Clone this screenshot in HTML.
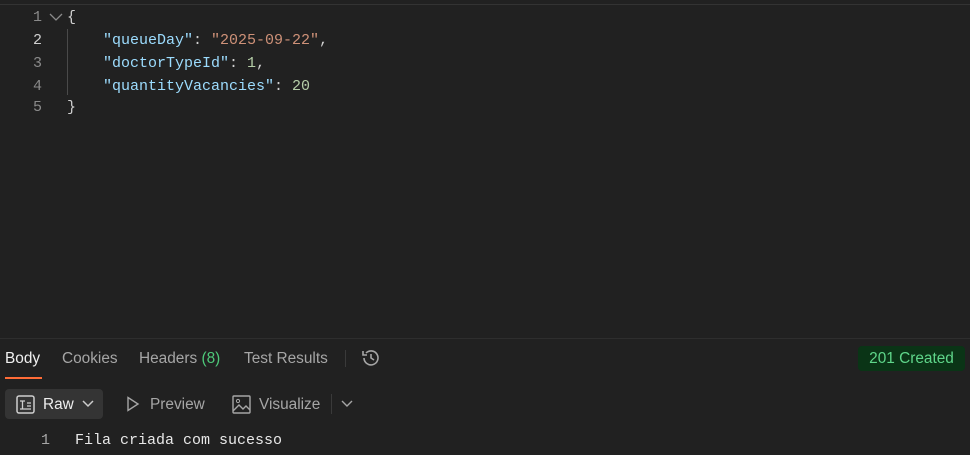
<!DOCTYPE html>
<html><head><meta charset="utf-8"><style>
*{margin:0;padding:0;box-sizing:border-box}
body{width:970px;height:455px;background:#212121;overflow:hidden;position:relative;font-family:"Liberation Sans",sans-serif;color:#a6a6a6}
.top{position:absolute;left:0;top:0;width:970px;height:5px;background:#212121;border-bottom:1px solid #333}
.mono{font-family:"Liberation Mono",monospace;font-size:15px}
.ln{position:absolute;left:0;width:42px;text-align:right;color:#8a8a8a}
.code{position:absolute;left:67px;white-space:pre;color:#d0d0d0}
.k{color:#9cdcfe}.s{color:#ce9178}.n{color:#b5cea8}
.guide{position:absolute;left:67px;top:29px;width:1px;height:66px;background:#4a4a4a}
.div{position:absolute;left:0;top:338px;width:970px;height:1px;background:#2e2e2e}
.tab{position:absolute;top:350px;font-size:15.4px;color:#a6a6a6}
</style></head><body>
<div class="top"></div>
<div class="mono">
<div class="ln" style="top:9px">1</div>
<div class="ln" style="top:32px;color:#cfcfcf">2</div>
<div class="ln" style="top:55px">3</div>
<div class="ln" style="top:78px">4</div>
<div class="ln" style="top:99px">5</div>
<svg style="position:absolute;left:49px;top:12px" width="14" height="10"><path d="M1 2 L7 8 L13 2" stroke="#8a8a8a" stroke-width="1.3" fill="none"/></svg>
<div class="guide"></div>
<div class="code" style="top:9px">{</div>
<div class="code" style="top:32px;left:103px"><span class="k">"queueDay"</span>: <span class="s">"2025-09-22"</span>,</div>
<div class="code" style="top:55px;left:103px"><span class="k">"doctorTypeId"</span>: <span class="n">1</span>,</div>
<div class="code" style="top:78px;left:103px"><span class="k">"quantityVacancies"</span>: <span class="n">20</span></div>
<div class="code" style="top:99px">}</div>
</div>
<div class="div"></div>
<div class="tab" style="left:5px;color:#f0f0f0">Body</div>
<div style="position:absolute;left:5px;top:377px;width:37px;height:2px;background:#ff6c37"></div>
<div class="tab" style="left:62px">Cookies</div>
<div class="tab" style="left:139px">Headers <span style="color:#4ec97a">(8)</span></div>
<div class="tab" style="left:244px">Test Results</div>
<div style="position:absolute;left:345px;top:350px;width:1px;height:17px;background:#3a3a3a"></div>
<svg style="position:absolute;left:360px;top:347px" width="22" height="22" viewBox="0 0 22 22"><path d="M4 11 A7 7 0 1 0 6 6" stroke="#a6a6a6" stroke-width="1.6" fill="none"/><path d="M3 4 L3 8 L7 8" stroke="#a6a6a6" stroke-width="1.6" fill="none"/><path d="M11 7 L11 11 L14 13" stroke="#a6a6a6" stroke-width="1.6" fill="none"/></svg>
<div style="position:absolute;left:858px;top:346px;width:107px;height:25px;background:#0a3416;border-radius:4px;color:#5fd68a;font-size:15.4px;line-height:25px;text-align:center">201 Created</div>
<div style="position:absolute;left:5px;top:389px;width:98px;height:30px;background:#343434;border-radius:4px"></div>
<svg style="position:absolute;left:16px;top:395px" width="19" height="19"><rect x="1" y="1" width="17" height="17" rx="2" stroke="#cfcfcf" stroke-width="1.5" fill="none"/><path d="M4 6 H9 M6.5 6 V14 M11 8 H15 M11 11 H15 M4 14 H15" stroke="#cfcfcf" stroke-width="1.3"/></svg>
<div class="tab" style="left:43px;top:396px;color:#eee">Raw</div>
<svg style="position:absolute;left:82px;top:399px" width="12" height="10"><path d="M1 2 L6 7 L11 2" stroke="#ccc" stroke-width="1.5" fill="none"/></svg>
<svg style="position:absolute;left:126px;top:396px" width="14" height="16"><path d="M2 1.5 L12 8 L2 14.5 Z" stroke="#a6a6a6" stroke-width="1.4" fill="none"/></svg>
<div class="tab" style="left:150px;top:396px">Preview</div>
<svg style="position:absolute;left:232px;top:395px" width="19" height="19"><rect x="1" y="1" width="17" height="17" rx="1" stroke="#a6a6a6" stroke-width="1.4" fill="none"/><circle cx="6" cy="6" r="1.6" stroke="#a6a6a6" fill="none"/><path d="M1 16 L7 10 L11 14 L14 11 L18 15" stroke="#a6a6a6" stroke-width="1.4" fill="none"/></svg>
<div class="tab" style="left:259px;top:396px">Visualize</div>
<div style="position:absolute;left:331px;top:394px;width:1px;height:20px;background:#3a3a3a"></div>
<svg style="position:absolute;left:341px;top:399px" width="12" height="10"><path d="M1 2 L6 7 L11 2" stroke="#a6a6a6" stroke-width="1.4" fill="none"/></svg>
<div class="mono" style="position:absolute;left:41px;top:432px;color:#a6a6a6">1</div>
<div class="mono" style="position:absolute;left:75px;top:432px;color:#e8e8e8;white-space:pre">Fila criada com sucesso</div>
</body></html>
